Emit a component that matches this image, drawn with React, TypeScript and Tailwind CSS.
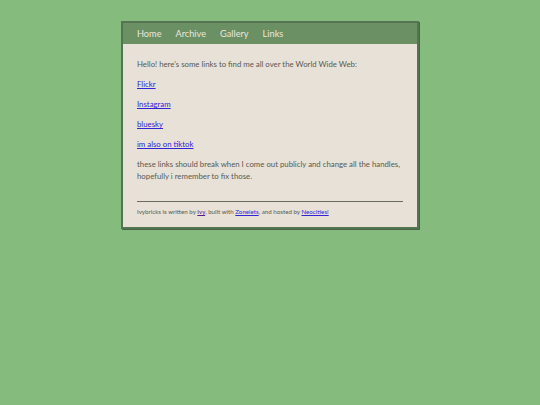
export default function App() {
  return (
    <div className="min-h-[405px] w-full bg-[#86bb7e] pt-[21px]" style={{ fontFamily: 'Lato, "Noto Sans", sans-serif' }}>
      <div className="ml-[121px] w-[298px] border-2 border-[#557552] bg-[#e7e1d8] shadow-[1px_1px_0_#4a6447]">
        <nav className="flex h-[21px] items-center gap-[14px] bg-[#6b9064] pl-[14px] text-[9.2px] text-[#ece6dc]">
          <span>Home</span>
          <span>Archive</span>
          <span>Gallery</span>
          <span>Links</span>
        </nav>
        <main className="px-[14px] pt-[14px] pb-[10px] text-[7.8px] leading-[12px] text-[#595950]">
          <p>Hello! here's some links to find me all over the World Wide Web:</p>
          <p className="mt-[8px]"><a href="#" className="text-[#3224d4] underline">Flickr</a></p>
          <p className="mt-[8px]"><a href="#" className="text-[#3224d4] underline">Instagram</a></p>
          <p className="mt-[8px]"><a href="#" className="text-[#3224d4] underline">bluesky</a></p>
          <p className="mt-[8px]"><a href="#" className="text-[#3224d4] underline">im also on tiktok</a></p>
          <p className="mt-[8px]">these links should break when I come out publicly and change all the handles, hopefully i remember to fix those.</p>
          <hr className="mt-[19px] border-t border-[#6a6a62]" />
          <p className="mt-[5px] text-[6.2px] leading-[10px]">
            Ivybricks is written by <a href="#" className="text-[#5a1a8b] underline">Ivy</a>, built with{' '}
            <a href="#" className="text-[#3224d4] underline">Zonelets</a>, and hosted by{' '}
            <a href="#" className="text-[#3224d4] underline">Neocities!</a>
          </p>
        </main>
      </div>
    </div>
  );
}
